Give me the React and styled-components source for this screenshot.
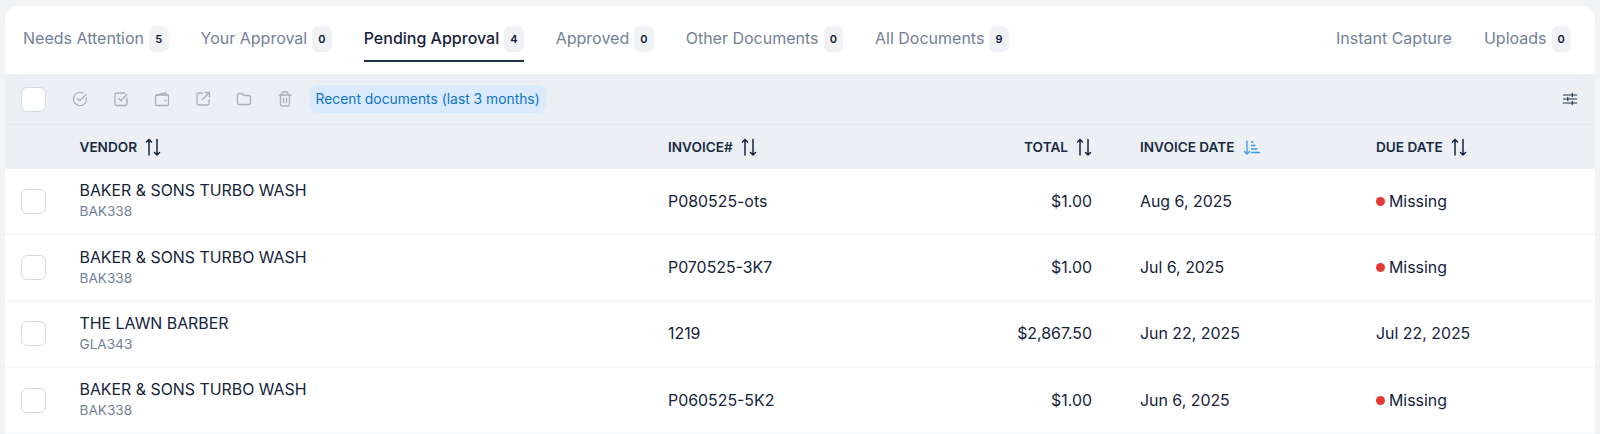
import React from 'react';
import styled, { createGlobalStyle } from 'styled-components';

const GlobalStyle = createGlobalStyle`
  html, body {
    margin: 0;
    height: 434px;
    overflow: hidden;
    background: #f2f3f5;
    font-family: Inter, "Liberation Sans", sans-serif;
    color: #14233c;
  }
`;

const Page = styled.div`
  padding: 6px 5px 0;
`;

const Card = styled.div`
  background: #fff;
  border-radius: 14px 14px 0 0;
  overflow: hidden;
`;

const TabBar = styled.div`
  display: flex;
  justify-content: space-between;
  height: 68px;
  padding: 0 24px 0 18px;
  box-sizing: border-box;
`;

const TabGroup = styled.div`
  display: flex;
  gap: 32px;
`;

const Tab = styled.div`
  display: flex;
  align-items: center;
  gap: 5px;
  height: 56px;
  box-sizing: border-box;
  padding-top: 10px;
  font-size: 16px;
  font-weight: ${(props) => (props.$active ? 500 : 400)};
  color: ${(props) => (props.$active ? '#14233c' : '#738198')};
  border-bottom: 2px solid ${(props) => (props.$active ? '#1c3049' : 'transparent')};
`;

const Badge = styled.span`
  display: flex;
  align-items: center;
  justify-content: center;
  width: 19.5px;
  height: 26px;
  margin-top: 1px;
  border-radius: 6px;
  background: #f1f2f5;
  font-size: 11px;
  font-weight: 600;
  color: #14233c;
`;

const Toolbar = styled.div`
  display: flex;
  align-items: center;
  height: 50px;
  padding: 0 16px 0 15.5px;
  background: #eceff4;
  border-bottom: 1px solid #e4e7ed;
`;

const Checkbox = styled.div`
  width: 25px;
  height: 25px;
  box-sizing: border-box;
  border-radius: 6px;
  background: #fff;
  border: 1px solid #d3dae6;
`;

const IconRow = styled.div`
  display: flex;
  gap: 23px;
  margin-left: 25px;
  color: #a9b0ba;
`;

const FilterChip = styled.div`
  margin-left: 16px;
  padding: 0 6px;
  height: 28px;
  line-height: 28px;
  border-radius: 8px;
  background: #d9ebfc;
  color: #0f73c9;
  font-size: 13.85px;
`;

const SettingsButton = styled.div`
  display: flex;
  margin-left: auto;
  margin-right: 1px;
  color: #22324a;
`;

const Row = styled.div`
  display: grid;
  grid-template-columns: 74.5px 588.5px 282px 142px 48px 236px 1fr;
  align-items: center;
  box-sizing: border-box;
`;

const HeaderRow = styled(Row)`
  height: 44px;
  background: #eceff4;
`;

const HeaderCell = styled.div`
  display: flex;
  align-items: center;
  justify-content: ${(props) => (props.$right ? 'flex-end' : 'flex-start')};
  gap: 8px;
  font-size: 13.6px;
  font-weight: 600;
  color: #1a2a42;
`;

const BodyRow = styled(Row)`
  height: 66.4px;
  border-bottom: 2px solid #f4f6f9;
`;

const CheckCell = styled.div`
  padding-left: 15.5px;
`;

const VendorName = styled.div`
  font-size: 15.9px;
  line-height: 21px;
  color: #14233c;
`;

const VendorCode = styled.div`
  font-size: 13.6px;
  line-height: 21px;
  color: #738198;
`;

const Cell = styled.div`
  display: flex;
  align-items: center;
  justify-content: ${(props) => (props.$right ? 'flex-end' : 'flex-start')};
  gap: 4px;
  font-size: 15.9px;
  color: #14233c;
`;

const RedDot = styled.span`
  width: 9px;
  height: 9px;
  border-radius: 50%;
  background: #e53935;
`;

const Icon = ({ children, size = 18, width = 1.3 }) => (
  <svg width={size} height={size} viewBox="0 0 18 18" fill="none" stroke="currentColor" strokeWidth={width} strokeLinecap="round" strokeLinejoin="round">
    {children}
  </svg>
);

const SortIcon = () => (
  <svg width="16" height="18" viewBox="0 0 16 18" fill="none" stroke="#14233c" strokeWidth="1.5" strokeLinecap="round" strokeLinejoin="round">
    <path d="M4 17V1.500M1.500 4 4 1.500 6.500 4" />
    <path d="M12 1.500V17M9.500 14.500 12 17l2.500-2.500" />
  </svg>
);

const SortedIcon = () => (
  <svg width="17" height="18" viewBox="0 0 17 18" fill="none" stroke="#3b9af0" strokeWidth="1.3" strokeLinecap="round" strokeLinejoin="round">
    <path d="M4 3v13M1.500 13.500 4 16l2.500-2.500" />
    <path d="M8.500 4h1.500M8.500 7.500h3.500M8.500 11H14M8.500 14.500h8" />
  </svg>
);

const toolbarIcons = [
  <><path d="M15.500 8.200A6.600 6.600 0 1 1 12 3.200" /><path d="m6.500 8.500 2.300 2.300L15 4.500" /></>,
  <><path d="M15 8v6a1.500 1.500 0 0 1-1.500 1.500h-9A1.500 1.500 0 0 1 3 14V4.500A1.500 1.500 0 0 1 4.500 3H13" /><path d="m6.500 8.500 2.300 2.300L15 4.500" /></>,
  <><path d="M2.500 6.500A1.500 1.500 0 0 1 4 5h10.500A1 1 0 0 1 15.500 6v8a1.500 1.500 0 0 1-1.500 1.500H4A1.500 1.500 0 0 1 2.500 14z" /><path d="M3 5.500 12 3a1 1 0 0 1 1.300 1V5" /><circle cx="12.500" cy="10.500" r=".4" /></>,
  <><path d="M8.500 3H4.500A1.500 1.500 0 0 0 3 4.500v9A1.500 1.500 0 0 0 4.500 15h9a1.500 1.500 0 0 0 1.500-1.500V10" /><path d="M8.500 9.500 15.500 2.500M11 2.500h4.500V7" /></>,
  <path d="M2.500 5A1.500 1.500 0 0 1 4 3.500h3l2 2h5A1.500 1.500 0 0 1 15.500 7v6A1.500 1.500 0 0 1 14 14.500H4A1.500 1.500 0 0 1 2.500 13z" />,
  <><path d="M3 5h12M4.500 5v9.500A1.500 1.500 0 0 0 6 16h6a1.500 1.500 0 0 0 1.500-1.500V5" /><path d="M6 5V3.500A1.500 1.500 0 0 1 7.500 2h3A1.500 1.500 0 0 1 12 3.500V5" /><path d="M7.500 8.500v4M10.500 8.500v4" /></>,
];

const tabs = [
  { label: 'Needs Attention', count: 5 },
  { label: 'Your Approval', count: 0 },
  { label: 'Pending Approval', count: 4, active: true },
  { label: 'Approved', count: 0 },
  { label: 'Other Documents', count: 0 },
  { label: 'All Documents', count: 9 },
];

const rows = [
  { vendor: 'BAKER & SONS TURBO WASH', code: 'BAK338', invoice: 'P080525-ots', total: '$1.00', date: 'Aug 6, 2025' },
  { vendor: 'BAKER & SONS TURBO WASH', code: 'BAK338', invoice: 'P070525-3K7', total: '$1.00', date: 'Jul 6, 2025' },
  { vendor: 'THE LAWN BARBER', code: 'GLA343', invoice: '1219', total: '$2,867.50', date: 'Jun 22, 2025', due: 'Jul 22, 2025' },
  { vendor: 'BAKER & SONS TURBO WASH', code: 'BAK338', invoice: 'P060525-5K2', total: '$1.00', date: 'Jun 6, 2025' },
];

const App = () => (
  <Page>
    <GlobalStyle />
    <Card>
      <TabBar>
        <TabGroup>
          {tabs.map((tab) => (
            <Tab key={tab.label} $active={tab.active}>
              {tab.label}
              <Badge>{tab.count}</Badge>
            </Tab>
          ))}
        </TabGroup>
        <TabGroup>
          <Tab>Instant Capture</Tab>
          <Tab>
            Uploads
            <Badge>0</Badge>
          </Tab>
        </TabGroup>
      </TabBar>

      <Toolbar>
        <Checkbox />
        <IconRow>
          {toolbarIcons.map((icon, i) => (
            <Icon key={i} size={18}>{icon}</Icon>
          ))}
        </IconRow>
        <FilterChip>Recent documents (last 3 months)</FilterChip>
        <SettingsButton>
          <Icon size={16}>
            <path d="M1.500 4.500h15M1.500 9h15M1.500 13.500h15" />
            <path d="M11.500 2.500v4M6.500 7v4M11.500 11.500v4" />
          </Icon>
        </SettingsButton>
      </Toolbar>

      <HeaderRow>
        <div />
        <HeaderCell>VENDOR <SortIcon /></HeaderCell>
        <HeaderCell>INVOICE# <SortIcon /></HeaderCell>
        <HeaderCell $right>TOTAL <SortIcon /></HeaderCell>
        <div />
        <HeaderCell>INVOICE DATE <SortedIcon /></HeaderCell>
        <HeaderCell>DUE DATE <SortIcon /></HeaderCell>
      </HeaderRow>

      {rows.map((row) => (
        <BodyRow key={row.invoice}>
          <CheckCell><Checkbox /></CheckCell>
          <div>
            <VendorName>{row.vendor}</VendorName>
            <VendorCode>{row.code}</VendorCode>
          </div>
          <Cell>{row.invoice}</Cell>
          <Cell $right>{row.total}</Cell>
          <div />
          <Cell>{row.date}</Cell>
          <Cell>
            {row.due ? row.due : (<><RedDot />Missing</>)}
          </Cell>
        </BodyRow>
      ))}
    </Card>
  </Page>
);

export default App;
